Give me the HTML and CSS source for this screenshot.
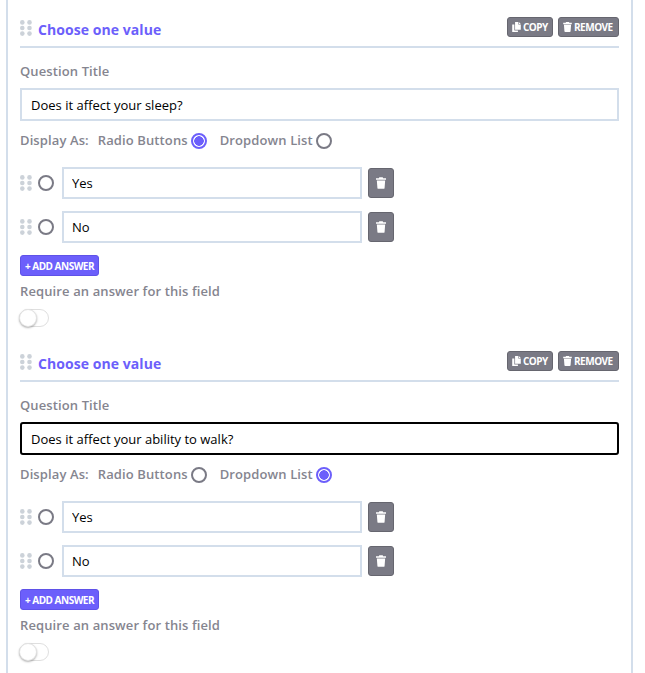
FILE: index.html
```html
<!DOCTYPE html>
<html lang="en">
<head>
<meta charset="utf-8">
<title>Form builder</title>
<link rel="stylesheet" href="styles.css">
</head>
<body>
<svg class="defs" width="0" height="0" aria-hidden="true">
  <symbol id="dots" viewBox="0 0 12 16"><g fill="#ccd2d9"><circle cx="2.300" cy="2.400" r="2.300"/><circle cx="9.500" cy="2.400" r="2.300"/><circle cx="2.300" cy="8" r="2.300"/><circle cx="9.500" cy="8" r="2.300"/><circle cx="2.300" cy="13.600" r="2.300"/><circle cx="9.500" cy="13.600" r="2.300"/></g></symbol>
  <symbol id="trash" viewBox="0 0 12 14"><path fill="currentColor" d="M4 0h4l.6 1.200H12v1.800H0V1.200h3.400zM1 4h10l-.7 8.900a1.200 1.200 0 0 1-1.200 1.100H2.900a1.200 1.200 0 0 1-1.200-1.100z"/></symbol>
  <symbol id="copy" viewBox="0 0 12 14"><path fill="currentColor" d="M4 0h4.500v3.500H12V11H4zM9.300 0 12 2.700H9.300zM0 3.500h3V12h5v2H0z"/></symbol>
</svg>
<main class="panel">
  <section class="block">
    <header class="head">
      <svg class="grip grip-head"><use href="#dots"/></svg>
      <h2 class="title">Choose one value</h2>
      <div class="tools">
        <button class="tool tool-copy"><svg class="tool-ico"><use href="#copy"/></svg>COPY</button>
        <button class="tool tool-remove"><svg class="tool-ico"><use href="#trash"/></svg>REMOVE</button>
      </div>
    </header>
    <label class="label">Question Title</label>
    <input class="field title-field" value="Does it affect your sleep?">
    <div class="display">
      <span class="label">Display As:</span>
      <span class="label opt">Radio Buttons</span><span class="radio on"></span>
      <span class="label opt opt-2">Dropdown List</span><span class="radio"></span>
    </div>
    <div class="answer">
      <svg class="grip"><use href="#dots"/></svg><span class="radio"></span>
      <input class="field answer-field" value="Yes">
      <button class="del"><svg class="del-ico"><use href="#trash"/></svg></button>
    </div>
    <div class="answer">
      <svg class="grip"><use href="#dots"/></svg><span class="radio"></span>
      <input class="field answer-field" value="No">
      <button class="del"><svg class="del-ico"><use href="#trash"/></svg></button>
    </div>
    <button class="add">+ ADD ANSWER</button>
    <p class="label require">Require an answer for this field</p>
    <span class="toggle"><span class="knob"></span></span>
  </section>
  <section class="block">
    <header class="head">
      <svg class="grip grip-head"><use href="#dots"/></svg>
      <h2 class="title">Choose one value</h2>
      <div class="tools">
        <button class="tool tool-copy"><svg class="tool-ico"><use href="#copy"/></svg>COPY</button>
        <button class="tool tool-remove"><svg class="tool-ico"><use href="#trash"/></svg>REMOVE</button>
      </div>
    </header>
    <label class="label">Question Title</label>
    <input class="field title-field focus" value="Does it affect your ability to walk?">
    <div class="display">
      <span class="label">Display As:</span>
      <span class="label opt">Radio Buttons</span><span class="radio"></span>
      <span class="label opt opt-2">Dropdown List</span><span class="radio on"></span>
    </div>
    <div class="answer">
      <svg class="grip"><use href="#dots"/></svg><span class="radio"></span>
      <input class="field answer-field" value="Yes">
      <button class="del"><svg class="del-ico"><use href="#trash"/></svg></button>
    </div>
    <div class="answer">
      <svg class="grip"><use href="#dots"/></svg><span class="radio"></span>
      <input class="field answer-field" value="No">
      <button class="del"><svg class="del-ico"><use href="#trash"/></svg></button>
    </div>
    <button class="add">+ ADD ANSWER</button>
    <p class="label require">Require an answer for this field</p>
    <span class="toggle"><span class="knob"></span></span>
  </section>
</main>
</body>
</html>
```
FILE: styles.css
```css
* { box-sizing: border-box; }
html, body { margin: 0; padding: 0; height: 673px; overflow: hidden; background: #fff; }
body { font-family: "Open Sans", sans-serif; font-size: 13px; color: #000; }
.defs { display: block; height: 0; }
.panel {
  width: 627px;
  height: 673px;
  margin-left: 6px;
  padding: 0 12px;
  border-left: 2px solid #d3deeb;
  border-right: 2px solid #d3deeb;
  overflow: hidden;
}
.block { display: flex; flex-direction: column; align-items: flex-start; height: 334px; padding-top: 16px; }
.head {
  width: 100%;
  height: 32px;
  display: flex;
  align-items: center;
  border-bottom: 2px solid #d3deeb;
  padding-bottom: 2px;
  flex: none;
}
.grip { width: 12px; height: 16px; flex: none; display: block; }
.grip-head { margin-top: -5px; }
.title { margin: 0 0 0 6px; font-size: 14px; line-height: 20px; font-weight: 700; color: #6c5ffb; letter-spacing: .06px; }
.tools { margin-left: auto; display: flex; gap: 5px; margin-top: -6px; }
.tool {
  height: 20px;
  padding: 0 0 0 4px;
  display: flex;
  align-items: center;
  gap: 2px;
  background: #7a7a85;
  border: 1px solid #66666f;
  border-radius: 3px;
  color: #fff;
  font: 700 10px/1 "Open Sans", sans-serif;
  letter-spacing: -.5px;
}
.tool-copy { width: 46px; }
.tool-remove { width: 61px; }
.tool-ico { width: 9px; height: 10px; flex: none; }
.label { font-size: 13px; line-height: 18px; font-weight: 600; color: #85858f; letter-spacing: .11px; }
.head + .label { margin-top: 14px; }
.field {
  font: 400 13px "Open Sans", sans-serif;
  color: #000;
  background: #fff;
  border: 2px solid #d3deeb;
  outline: none;
}
.title-field { width: 100%; height: 33px; margin-top: 8px; padding: 0 9px; flex: none; }
.focus { border-color: #000; border-radius: 3px; }
.display { display: flex; align-items: center; height: 18px; margin-top: 10px; }
.opt { margin-left: 9px; }
.opt-2 { margin-left: 13px; }
.display .radio { margin-left: 3px; margin-top: 2px; }
.radio {
  width: 16px;
  height: 16px;
  flex: none;
  border: 2px solid #7a7a85;
  border-radius: 50%;
  background: #fff;
}
.radio.on {
  border-color: #6c5ffb;
  background: radial-gradient(circle, #6c5ffb 0 4.500px, #fff 5px);
}
.answer { display: flex; align-items: center; width: 374px; height: 32px; flex: none; }
.display + .answer { margin-top: 18px; }
.answer + .answer { margin-top: 12px; }
.answer .radio { margin-left: 6px; }
.answer-field { width: 300px; height: 32px; margin-left: 8px; padding: 0 8px; }
.del {
  width: 26px;
  height: 30px;
  margin-left: 6px;
  padding: 0;
  display: flex;
  align-items: center;
  justify-content: center;
  background: #7a7a85;
  border: 1px solid #66666f;
  border-radius: 3px;
  color: #fff;
}
.del-ico { width: 10px; height: 12px; }
.add {
  width: 79px;
  height: 21px;
  margin-top: 12px;
  padding: 0;
  background: #6c5ffb;
  border: 1px solid #5f52e8;
  border-radius: 3px;
  color: #fff;
  font: 700 10px/1 "Open Sans", sans-serif;
  letter-spacing: -.5px;
  flex: none;
}
.require { margin: 6px 0 0; }
.toggle {
  display: block;
  position: relative;
  width: 30px;
  height: 18px;
  margin-top: 9px;
  margin-left: -1px;
  background: #fff;
  border: 1px solid #dfdfdf;
  border-radius: 9px;
  flex: none;
}
.knob {
  position: absolute;
  left: -1px;
  top: -1px;
  width: 18px;
  height: 18px;
  border-radius: 50%;
  background: #fff;
  border: 1px solid #e2e2e2;
  box-shadow: 0 1px 2px rgba(0,0,0,.3);
}
```
